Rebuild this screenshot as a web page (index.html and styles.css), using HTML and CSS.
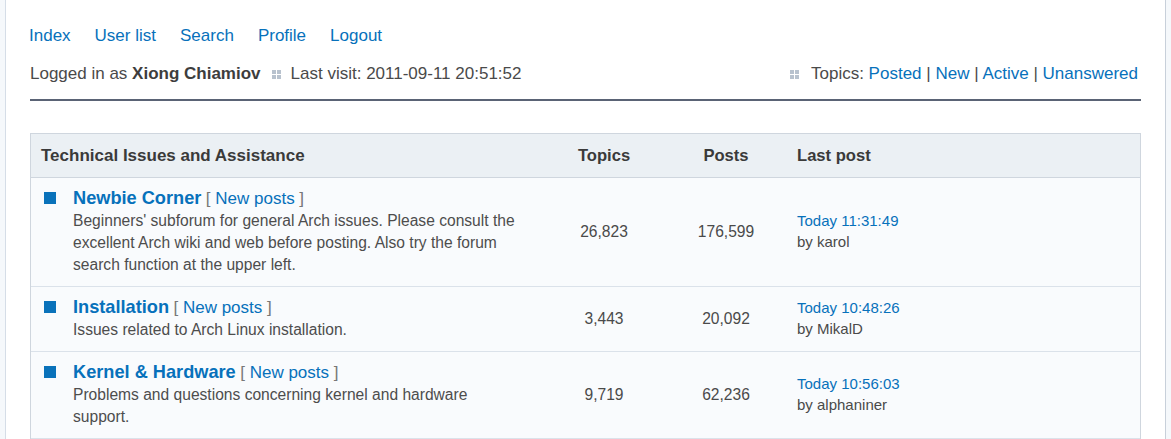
FILE: index.html
```html
<!DOCTYPE html>
<html>
<head>
<meta charset="utf-8">
<link rel="stylesheet" href="styles.css">
</head>
<body>
<div class="page">
  <nav class="nav">
    <a href="#">Index</a>
    <a href="#">User list</a>
    <a href="#">Search</a>
    <a href="#">Profile</a>
    <a href="#">Logout</a>
  </nav>
  <div class="info">
    <div class="info-left">
      <span>Logged in as <strong>Xiong Chiamiov</strong></span>
      <span class="sep"><i></i><i></i><i></i><i></i></span>
      <span>Last visit: 2011-09-11 20:51:52</span>
    </div>
    <div class="info-right">
      <span class="sep"><i></i><i></i><i></i><i></i></span>
      <span>Topics: <a href="#">Posted</a> | <a href="#">New</a> | <a href="#">Active</a> | <a href="#">Unanswered</a></span>
    </div>
  </div>
  <div class="rule"></div>

  <div class="board">
    <div class="row head">
      <div class="c-forum">Technical Issues and Assistance</div>
      <div class="c-num">Topics</div>
      <div class="c-num">Posts</div>
      <div class="c-last">Last post</div>
    </div>

    <div class="row">
      <div class="c-forum">
        <span class="icon"></span>
        <div class="forum-body">
          <div class="title"><a class="fname" href="#">Newbie Corner</a> <span class="np">[ <a href="#">New posts</a> ]</span></div>
          <div class="desc">Beginners' subforum for general Arch issues. Please consult the excellent Arch wiki and web before posting. Also try the forum search function at the upper left.</div>
        </div>
      </div>
      <div class="c-num">26,823</div>
      <div class="c-num">176,599</div>
      <div class="c-last"><a href="#">Today 11:31:49</a><span>by karol</span></div>
    </div>

    <div class="row">
      <div class="c-forum">
        <span class="icon"></span>
        <div class="forum-body">
          <div class="title"><a class="fname" href="#">Installation</a> <span class="np">[ <a href="#">New posts</a> ]</span></div>
          <div class="desc">Issues related to Arch Linux installation.</div>
        </div>
      </div>
      <div class="c-num">3,443</div>
      <div class="c-num">20,092</div>
      <div class="c-last"><a href="#">Today 10:48:26</a><span>by MikalD</span></div>
    </div>

    <div class="row">
      <div class="c-forum">
        <span class="icon"></span>
        <div class="forum-body">
          <div class="title"><a class="fname" href="#">Kernel &amp; Hardware</a> <span class="np">[ <a href="#">New posts</a> ]</span></div>
          <div class="desc">Problems and questions concerning kernel and hardware support.</div>
        </div>
      </div>
      <div class="c-num">9,719</div>
      <div class="c-num">62,236</div>
      <div class="c-last"><a href="#">Today 10:56:03</a><span>by alphaniner</span></div>
    </div>
  </div>
</div>
</body>
</html>
```

FILE: styles.css
```css
html, body {
  margin: 0;
  padding: 0;
  background: #f5f8fb;
}
body {
  font-family: "Liberation Sans", Arial, sans-serif;
  color: #4a4a4a;
}
a {
  color: #0771bb;
  text-decoration: none;
}
.page {
  margin: 0 5px;
  min-height: 439px;
  box-sizing: border-box;
  background: #fff;
  border-left: 1px solid #d5dde7;
  border-right: 1px solid #c8d0da;
  padding: 25px 24px 0;
}
.nav {
  display: flex;
  gap: 24px;
  font-size: 17px;
  line-height: 22px;
  margin-left: -1px;
}
.info {
  margin-top: 16px;
  display: flex;
  justify-content: space-between;
  align-items: center;
  font-size: 17px;
  line-height: 22px;
  color: #4a4a4a;
}
.info strong {
  color: #3d3d3d;
}
.info-left, .info-right {
  display: flex;
  align-items: center;
}
.info-right {
  padding-right: 3px;
}
.sep {
  display: grid;
  grid-template-columns: 4px 4px;
  grid-template-rows: 4px 4px;
  gap: 1px;
  margin: 0 10px 0 11px;
}
.info-right .sep {
  margin: 0 12px 0 0;
}
.sep i {
  display: block;
  background: #b8c2ce;
}
.rule {
  margin-top: 14px;
  height: 2px;
  background: #5a6375;
}
.board {
  margin-top: 32px;
  border: 1px solid #cfd6de;
  border-bottom: none;
  background: #f9fbfd;
}
.row {
  display: grid;
  grid-template-columns: 1fr 100px 144px 342px;
  border-bottom: 1px solid #dbe2ea;
  align-items: center;
}
.row.head {
  background: #ebf0f4;
  border-bottom-color: #cfd6de;
  font-weight: bold;
  font-size: 17px;
  line-height: 21px;
  color: #3a3a3a;
}
.row.head > div {
  padding-top: 11px;
  padding-bottom: 11px;
}
.row.head .c-forum {
  padding-left: 10px;
}
.c-forum {
  display: flex;
  align-items: flex-start;
  padding: 9px 0 10px 13px;
}
.c-num {
  text-align: center;
  font-size: 15.6px;
  color: #4a4a4a;
}
.row.head .c-num {
  font-size: 16.6px;
  color: #3a3a3a;
}
.c-last {
  display: flex;
  flex-direction: column;
  font-size: 15px;
  line-height: 21px;
  margin-left: -1px;
  padding-bottom: 2px;
}
.row.head .c-last {
  font-size: 16.6px;
  padding-bottom: 11px;
}
.c-last span {
  color: #4a4a4a;
}
.icon {
  flex: none;
  width: 12px;
  height: 12px;
  margin-top: 5px;
  margin-right: 17px;
  background: #0a72ba;
}
.forum-body {
  width: 452px;
}
.title {
  line-height: 22px;
}
.fname {
  font-size: 18.2px;
  font-weight: bold;
}
.np {
  font-size: 17px;
  color: #777;
}
.desc {
  font-size: 15.6px;
  line-height: 22px;
  color: #4d4d4d;
}
```
